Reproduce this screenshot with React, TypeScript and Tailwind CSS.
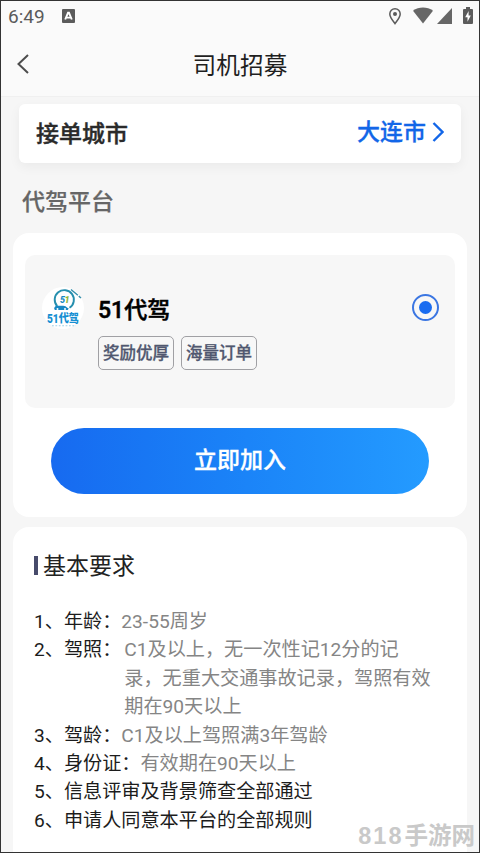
import type { ReactNode } from "react";

function StatusBar() {
  return (
    <div className="flex h-[30px] items-center pl-[7px] pr-[6px] text-[#5b5b5b]">
      <span className="w-[54px] pt-px font-[Roboto] text-[19px] leading-[30px]">6:49</span>
      <svg width="13" height="14" viewBox="0 0 13 14" className="-mt-px">
        <rect width="13" height="14" rx="1" fill="#5b5b5b" />
        <path d="M3.2 10.5 6 3.8h1L9.8 10.5M4.4 8.6h4.2" fill="none" stroke="#fff" strokeWidth="1.9" />
      </svg>
      <div className="ml-auto flex h-[18px] items-start">
        <svg width="12" height="17" viewBox="0 0 12 17" className="mt-px mr-[12px]">
          <path d="M6 .8C3 .8 .8 3 .8 5.9c0 3.4 3.4 7.2 5.2 9.7 1.8-2.5 5.2-6.3 5.2-9.7C11.2 3 9 .8 6 .8Z" fill="none" stroke="#5b5b5b" strokeWidth="1.5" />
          <circle cx="6" cy="5.9" r="2" fill="#5b5b5b" />
        </svg>
        <svg width="20" height="17" viewBox="0 0 20 17" className="mr-[4px]">
          <path d="M0 3.7C5.8-.6 14.2-.6 20 3.7L10 16.4Z" fill="#666" />
        </svg>
        <svg width="15" height="16" viewBox="0 0 15 16" className="mt-px mr-[11px]">
          <path d="M15 0V16H0Z" fill="#666" />
        </svg>
        <svg width="10" height="18" viewBox="0 0 10 18">
          <path d="M3 0h4v2h2q1 0 1 1v13q0 1-1 1H1q-1 0-1-1V3q0-1 1-1h2Z" fill="#5b5b5b" />
          <path d="M5.6 4 2.2 10.2h2.3v4.6L7.8 8.6H5.6Z" fill="#fff" />
        </svg>
      </div>
    </div>
  );
}

function PlatformLogo() {
  return (
    <svg width="42" height="42" viewBox="0 0 42 42">
      <circle cx="21" cy="21" r="21" fill="#fff" />
      <path d="M15.2 19.2A9.6 9.6 0 1 1 27.5 20.8" fill="none" stroke="#268fae" strokeWidth="1.9" />
      <path d="M29 2.5 39 11" stroke="#368fab" strokeWidth="1.4" strokeDasharray="9 1.2" />
      <text x="18" y="15.6" fontFamily="Roboto" fontWeight="900" fontStyle="italic" fontSize="9" fill="#168ac2">5</text>
      <text x="22.6" y="15.6" fontFamily="Roboto" fontWeight="900" fontStyle="italic" fontSize="9" fill="#8eb63c">1</text>
      <path d="M12.3 20.8q.5-2 3-2h6q2.4 0 4 2l1.5.7-1 1.5H13q-1.2-.6-.7-2.2Z" fill="#1788c4" />
      <circle cx="15.5" cy="22" r="1" fill="#fff" />
      <circle cx="23" cy="22" r="1" fill="#fff" />
      <text x="5" y="35.5" textLength="32" lengthAdjust="spacingAndGlyphs" fontFamily="Roboto, 'Noto Sans CJK SC', sans-serif" fontWeight="900" fontSize="12" fill="#168fd2">51代驾</text>
      <path d="M10 38.8h24" stroke="#9fcfe8" strokeWidth="1.1" strokeDasharray="1.8 1.6" />
    </svg>
  );
}

function Tag({ children }: { children: ReactNode }) {
  return (
    <span className="flex h-[34px] w-[76px] items-center justify-center whitespace-nowrap rounded-[5px] border border-[#a0a0a4] pt-[3px] text-[16.5px] font-medium text-[#50576f] [-webkit-text-stroke:0.3px]">
      {children}
    </span>
  );
}

type RequirementProps = { label: string; value?: string; indent?: boolean };

function Requirement({ label, value, indent }: RequirementProps) {
  return (
    <li className="flex">
      <span className="shrink-0 text-[#1c1c1c]">{label}</span>
      {value && (
        <span className={indent ? "ml-[3px] w-[312px] whitespace-pre-line text-[#858585]" : "text-[#858585]"}>
          {value}
        </span>
      )}
    </li>
  );
}

const requirements: RequirementProps[] = [
  { label: "1、年龄：", value: "23-55周岁" },
  { label: "2、驾照：", value: "C1及以上，无一次性记12分的记\n录，无重大交通事故记录，驾照有效\n期在90天以上", indent: true },
  { label: "3、驾龄：", value: "C1及以上驾照满3年驾龄" },
  { label: "4、身份证：", value: "有效期在90天以上" },
  { label: "5、信息评审及背景筛查全部通过" },
  { label: "6、申请人同意本平台的全部规则" },
];

export default function App() {
  return (
    <div className="relative flex h-[853px] w-[480px] flex-col overflow-hidden border border-[#333] bg-[#f6f6f6] font-[Roboto,'Noto_Sans_CJK_SC',sans-serif]">
      <header className="h-[96px] shrink-0 border-b border-[#f0f0f0] bg-[#fafafa]">
        <StatusBar />
        <div className="grid h-[66px] grid-cols-[40px_1fr_40px] items-center">
          <svg width="12" height="20" viewBox="0 0 12 20" className="ml-[16px]">
            <path d="M11 1 1.5 10 11 19" fill="none" stroke="#4d4d4d" strokeWidth="2" />
          </svg>
          <h1 className="pt-[3px] text-center text-[23.7px] leading-[30px] text-[#1f1f1f]">司机招募</h1>
        </div>
      </header>

      <section className="mx-[18px] mt-[7px] flex h-[59px] shrink-0 items-center justify-between rounded-[6px] bg-white pl-[17px] pr-[17px] shadow-[0_4px_12px_rgba(0,0,0,0.05)]">
        <span className="pt-[4px] text-[23px] font-medium text-[#2a2a2a] [-webkit-text-stroke:0.4px]">接单城市</span>
        <span className="flex items-center text-[23px] font-medium text-[#1266e8] [-webkit-text-stroke:0.3px]">
          大连市
          <svg width="12" height="20" viewBox="0 0 12 20" className="-mt-[4px] ml-[6px]">
            <path d="M1.5 1 10.5 10 1.5 19" fill="none" stroke="#1266e8" strokeWidth="2.4" />
          </svg>
        </span>
      </section>

      <h2 className="mt-[23px] ml-[21px] h-[34px] shrink-0 text-[23px] font-medium leading-[34px] text-[#666] [-webkit-text-stroke:0.2px]">代驾平台</h2>

      <section className="mx-[12px] mt-[13px] h-[284px] shrink-0 rounded-[16px] bg-white px-[12px] pt-[22px]">
        <div className="flex h-[153px] rounded-[10px] bg-[#f7f7f7] pl-[17px] pr-[16px]">
          <div className="mt-[32px]">
            <PlatformLogo />
          </div>
          <div className="ml-[14px] mt-[39px]">
            <h3 className="h-[34px] text-[23px] font-medium leading-[34px] text-black [-webkit-text-stroke:0.5px]">51代驾</h3>
            <div className="mt-[8px] flex gap-[7px]">
              <Tag>奖励优厚</Tag>
              <Tag>海量订单</Tag>
            </div>
          </div>
          <div className="mt-[39px] ml-auto flex size-[27px] items-center justify-center rounded-full border-2 border-[#3b76e2]">
            <span className="size-[13px] rounded-full bg-[#1a6cf0]" />
          </div>
        </div>
        <button className="mx-[26px] mt-[20px] flex h-[66px] w-[378px] items-center justify-center rounded-full bg-linear-to-r from-[#176af0] to-[#249bff] text-[23px] font-medium text-white [-webkit-text-stroke:0.3px]">
          立即加入
        </button>
      </section>

      <section className="mx-[12px] mt-[10px] h-[340px] shrink-0 rounded-t-[16px] bg-white pl-[21px] pt-[21px]">
        <h2 className="flex h-[36px] items-center text-[23px] text-[#222]">
          <span className="mr-[5px] h-[19px] w-[4px] -mt-[2px] bg-[#474b6b]" />
          <span className="pt-[3px]">基本要求</span>
        </h2>
        <ul className="mt-[24px] text-[19.15px] leading-[28.4px]">
          {requirements.map((item) => (
            <Requirement key={item.label} {...item} />
          ))}
        </ul>
      </section>

      <div className="absolute right-[4px] bottom-0 flex h-[30px] items-center text-[23.5px] font-bold text-[#c9c9c9]">
        <span className="mr-px tracking-[2px] font-['Liberation_Sans',sans-serif]">818</span>
        手游网
      </div>
    </div>
  );
}
